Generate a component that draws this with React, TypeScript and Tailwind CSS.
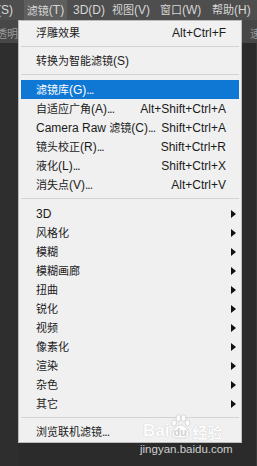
import React from "react";

const FONT = '"Liberation Sans", "Noto Sans CJK SC", sans-serif';

function Txt({ s }: { s: string }) {
  const parts = s.split(/([\u3000-\u9fff\uff00-\uffef]+|\.\.\.)/);
  return (
    <>
      {parts.map((p, i) =>
        /[\u3000-\u9fff\uff00-\uffef]/.test(p) ? (
          <span key={i} className="text-[11px]" style={{ fontFamily: '"Noto Sans CJK SC", sans-serif' }}>
            {p}
          </span>
        ) : p === "..." ? (
          <span key={i} className="tracking-[-1px]">
            {p}
          </span>
        ) : (
          <span key={i}>{p}</span>
        )
      )}
    </>
  );
}

function Arrow() {
  return (
    <svg width="5" height="8" viewBox="0 0 5 8" className="block">
      <polygon points="0,0 5,4 0,8" fill="#111" />
    </svg>
  );
}

function Row({
  label,
  shortcut,
  sub,
  active,
}: {
  label: string;
  shortcut?: string;
  sub?: boolean;
  active?: boolean;
}) {
  return (
    <div
      className={
        "flex h-[19px] items-center pl-[15px] " +
        (sub ? "pr-[3px] " : "pr-[13px] ") +
        (active ? "bg-[#0f78d4] text-white" : "text-[#1b1b1b]")
      }
    >
      <div className="whitespace-nowrap">
        <Txt s={label} />
      </div>
      <div className="ml-auto whitespace-nowrap">
        {shortcut ? shortcut : null}
        {sub ? <Arrow /> : null}
      </div>
    </div>
  );
}

function Sep({ h, top }: { h: number; top: number }) {
  return (
    <div className="flex flex-col" style={{ height: h, paddingTop: top }}>
      <div className="h-px bg-[#d2d2d2]" />
    </div>
  );
}

export default function App() {
  const subs = ["3D", "风格化", "模糊", "模糊画廊", "扭曲", "锐化", "视频", "像素化", "渲染", "杂色", "其它"];
  return (
    <div
      className="relative h-[466px] w-[257px] overflow-hidden bg-[#2b2b2b] text-[12px] leading-none"
      style={{ fontFamily: FONT }}
    >
      {/* menu bar */}
      <div className="flex h-[20px] items-center bg-[#4e4e4e] text-[#d6d6d6]">
        <div className="ml-[-3px] w-[27px] pl-0">(S)</div>
        <div className="flex h-[20px] w-[43px] items-center justify-center bg-[#5e5e5e]">
          <Txt s="滤镜(T)" />
        </div>
        <div className="w-[44px] pl-[6px]">3D(D)</div>
        <div className="w-[48px] pl-[1px]">
          <Txt s="视图(V)" />
        </div>
        <div className="w-[52px] pl-[1px]">
          <Txt s="窗口(W)" />
        </div>
        <div className="whitespace-nowrap pl-[1px]">
          <Txt s="帮助(H)" />
        </div>
      </div>
      {/* options bar */}
      <div className="flex h-[23px] items-center justify-between bg-[#474747] text-[#9a9a9a]">
        <div className="ml-[-4px] pt-[4px]">
          <Txt s="透明" />
        </div>
        <div className="mr-[-4px] pt-[4px]">
          <Txt s="速" />
        </div>
      </div>
      <div className="flex h-[423px]">
        <div className="w-[18px] bg-[#2e2e2e]" />
        <div className="flex-1" />
        <div className="ml-[3px] w-px bg-[#3a3a3a]" />
      </div>

      {/* dropdown menu */}
      <div className="absolute left-[18px] top-[20px] h-[423px] w-[224px] border border-[#bdbdbd] bg-[#f0f0f0] px-[2px] pt-[2px]">
        <Row label="浮雕效果" shortcut="Alt+Ctrl+F" />
        <Sep h={9} top={4} />
        <Row label="转换为智能滤镜(S)" />
        <Sep h={10} top={4} />
        <Row label="滤镜库(G)..." active />
        <Row label="自适应广角(A)..." shortcut="Alt+Shift+Ctrl+A" />
        <Row label="Camera Raw 滤镜(C)..." shortcut="Shift+Ctrl+A" />
        <Row label="镜头校正(R)..." shortcut="Shift+Ctrl+R" />
        <Row label="液化(L)..." shortcut="Shift+Ctrl+X" />
        <Row label="消失点(V)..." shortcut="Alt+Ctrl+V" />
        <Sep h={10} top={4} />
        {subs.map((s) => (
          <Row key={s} label={s} sub />
        ))}
        <Sep h={9} top={4} />
        <Row label="浏览联机滤镜..." />
      </div>

      {/* watermark */}
      <div className="absolute left-[143px] top-[414px] flex items-end opacity-90">
        <span
          className="text-[17px] font-bold leading-none text-white"
          style={{ fontFamily: '"Liberation Sans", sans-serif', textShadow: "0 0 1px #b4b4b4" }}
        >
          Bai
        </span>
        <div className="relative mx-[1px] h-[25px] w-[21px]">
          <svg width="21" height="25" viewBox="0 0 21 25" className="absolute left-0 top-0">
            <g fill="#fff" stroke="#c0c0c0" strokeWidth="0.6">
              <ellipse cx="4" cy="9" rx="2.4" ry="3" />
              <ellipse cx="8.5" cy="4" rx="2.4" ry="3.2" />
              <ellipse cx="13.5" cy="4" rx="2.4" ry="3.2" />
              <ellipse cx="17.5" cy="9" rx="2.4" ry="3" />
              <path d="M10.5 11 C6 11 2 17 2 20.5 C2 23.5 5 24 10.5 24 C16 24 19 23.5 19 20.5 C19 17 15 11 10.5 11 Z" />
            </g>
          </svg>
          <span
            className="absolute left-[3px] top-[13px] text-[11px] font-bold leading-none text-[#cdcdcd]"
            style={{ fontFamily: '"Liberation Sans", sans-serif' }}
          >
            du
          </span>
        </div>
        <span
          className="text-[15px] font-bold leading-none text-white"
          style={{ fontFamily: '"Noto Sans CJK SC", sans-serif', textShadow: "0 0 1px #b4b4b4" }}
        >
          经验
        </span>
      </div>
      <div
        className="absolute left-[140px] top-[444px] text-[11.5px] leading-none text-[#cfcfcf]"
        style={{ fontFamily: '"Liberation Sans", sans-serif' }}
      >
        jingyan.baidu.com
      </div>
    </div>
  );
}
